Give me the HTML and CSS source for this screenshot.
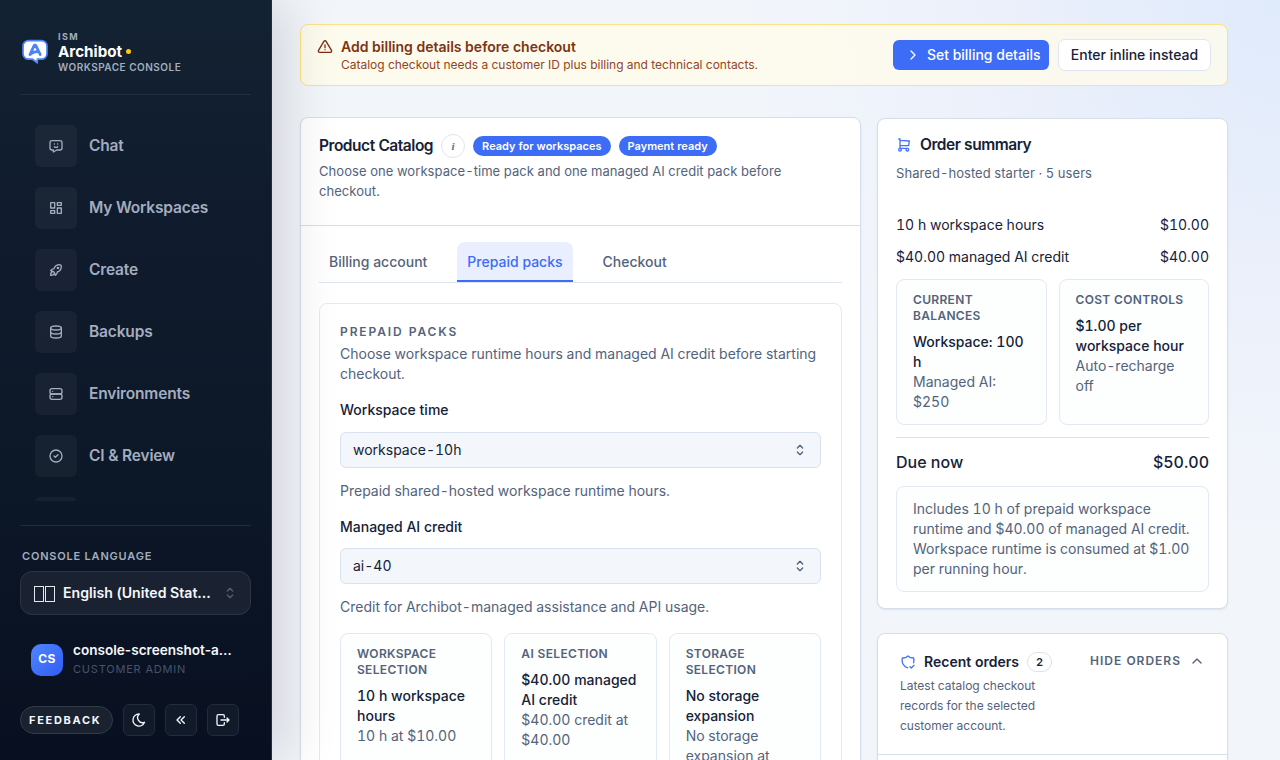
FILE: index.html
```html
<!DOCTYPE html>
<html lang="en">
<head>
<meta charset="utf-8">
<title>Archibot – Product Catalog</title>
<link rel="stylesheet" href="styles.css">
</head>
<body>
<div class="app">
  <aside class="sidebar">
    <div class="brand">
      <svg class="brand-logo" viewBox="0 0 28 28"><path d="M7.500 2.600h13a5.500 5.500 0 0 1 5.500 5.500v7.600a5.500 5.500 0 0 1-5.500 5.500h-4.200v3.600l-4.800-3.600h-4A5.500 5.500 0 0 1 2 15.700V8.100a5.500 5.500 0 0 1 5.500-5.500z" fill="#fff" stroke="#4b83fb" stroke-width="1.700" stroke-linejoin="round"/><path d="M9 16.500 13 7.800q1-1.700 2 0l4.200 8.700M9 16.500q4-3.600 8.300-2.700" fill="none" stroke="#4b83fb" stroke-width="2.800" stroke-linecap="round" stroke-linejoin="round"/></svg>
      <div class="brand-text">
        <span class="brand-over">ISM</span>
        <span class="brand-name">Archibot<i class="brand-dot"></i></span>
        <span class="brand-sub">WORKSPACE CONSOLE</span>
      </div>
    </div>
    <nav class="nav">
      <a class="nav-item"><span class="nav-icon"><svg class="icon" viewBox="0 0 24 24"><path d="M18 4a3 3 0 0 1 3 3v8a3 3 0 0 1-3 3h-5l-5 3v-3H6a3 3 0 0 1-3-3V7a3 3 0 0 1 3-3h12zM9.500 9h.01M14.500 9h.01M9.500 13a3.500 3.500 0 0 0 5 0"/></svg></span><span class="nav-label">Chat</span></a>
      <a class="nav-item"><span class="nav-icon"><svg class="icon" viewBox="0 0 24 24"><path d="M4 4h6v8H4zM4 16h6v4H4zM14 12h6v8h-6zM14 4h6v4h-6z"/></svg></span><span class="nav-label">My Workspaces</span></a>
      <a class="nav-item"><span class="nav-icon"><svg class="icon" viewBox="0 0 24 24"><path d="M4 13a8 8 0 0 1 7 7 6 6 0 0 0 3-5 9 9 0 0 0 6-8 3 3 0 0 0-3-3 9 9 0 0 0-8 6 6 6 0 0 0-5 3M7 14a6 6 0 0 0-3 6 6 6 0 0 0 6-3"/><circle cx="15" cy="9" r="1"/></svg></span><span class="nav-label">Create</span></a>
      <a class="nav-item"><span class="nav-icon"><svg class="icon" viewBox="0 0 24 24"><ellipse cx="12" cy="6" rx="8" ry="3"/><path d="M4 6v6a8 3 0 0 0 16 0V6M4 12v6a8 3 0 0 0 16 0v-6"/></svg></span><span class="nav-label">Backups</span></a>
      <a class="nav-item"><span class="nav-icon"><svg class="icon" viewBox="0 0 24 24"><rect x="3" y="4" width="18" height="8" rx="3"/><rect x="3" y="12" width="18" height="8" rx="3"/><path d="M7 8v.01M7 16v.01"/></svg></span><span class="nav-label">Environments</span></a>
      <a class="nav-item"><span class="nav-icon"><svg class="icon" viewBox="0 0 24 24"><circle cx="12" cy="12" r="9"/><path d="m9 12 2 2 4-4"/></svg></span><span class="nav-label">CI &amp; Review</span></a>
      <a class="nav-item"><span class="nav-icon"></span></a>
    </nav>
    <div class="side-foot">
      <span class="lang-label">CONSOLE LANGUAGE</span>
      <div class="lang-select"><span class="flag"><i></i><i></i></span><span class="lang-name">English (United States)</span><svg class="icon chev" viewBox="0 0 24 24"><path d="m8 9 4-4 4 4M16 15l-4 4-4-4"/></svg></div>
      <div class="user">
        <span class="avatar">CS</span>
        <div class="user-text"><span class="user-name">console-screenshot-admin</span><span class="user-role">CUSTOMER ADMIN</span></div>
      </div>
      <div class="actions">
        <span class="feedback">FEEDBACK</span>
        <span class="action"><svg class="icon" viewBox="0 0 24 24"><path d="M12 3h.393a7.500 7.500 0 0 0 7.920 12.446A9 9 0 1 1 12 3z"/></svg></span>
        <span class="action"><svg class="icon" viewBox="0 0 24 24"><path d="m11 7-5 5 5 5M17 7l-5 5 5 5"/></svg></span>
        <span class="action"><svg class="icon" viewBox="0 0 24 24"><path d="M14 8V6a2 2 0 0 0-2-2H5a2 2 0 0 0-2 2v12a2 2 0 0 0 2 2h7a2 2 0 0 0 2-2v-2M9 12h12l-3-3M18 15l3-3"/></svg></span>
      </div>
    </div>
  </aside>

  <main class="main">
    <section class="alert">
      <svg class="icon alert-icon" viewBox="0 0 24 24"><path d="M12 9v4M12 16v.01M10.363 3.591 2.257 17.125a1.914 1.914 0 0 0 1.636 2.871h16.214a1.914 1.914 0 0 0 1.636-2.870L13.637 3.591a1.914 1.914 0 0 0-3.274 0z"/></svg>
      <div class="alert-text">
        <span class="alert-title">Add billing details before checkout</span>
        <span class="alert-sub">Catalog checkout needs a customer ID plus billing and technical contacts.</span>
      </div>
      <a class="btn primary"><svg class="icon" viewBox="0 0 24 24"><path d="m9 6 6 6-6 6"/></svg>Set billing details</a>
      <a class="btn plain">Enter inline instead</a>
    </section>

    <div class="columns">
      <section class="card catalog">
        <header class="catalog-head">
          <div class="title-row"><h2 class="card-title">Product Catalog</h2><span class="info">i</span><span class="pill">Ready for workspaces</span><span class="pill">Payment ready</span></div>
          <p class="card-desc">Choose one workspace-time pack and one managed AI credit pack before checkout.</p>
        </header>
        <div class="tabs"><span class="tab">Billing account</span><span class="tab active">Prepaid packs</span><span class="tab">Checkout</span></div>
        <div class="panel">
          <span class="eyebrow">PREPAID PACKS</span>
          <p class="muted">Choose workspace runtime hours and managed AI credit before starting checkout.</p>
          <label class="field-label">Workspace time</label>
          <div class="select">workspace-10h<svg class="icon" viewBox="0 0 24 24"><path d="m8 9 4-4 4 4M16 15l-4 4-4-4"/></svg></div>
          <p class="muted hint">Prepaid shared-hosted workspace runtime hours.</p>
          <label class="field-label second">Managed AI credit</label>
          <div class="select">ai-40<svg class="icon" viewBox="0 0 24 24"><path d="m8 9 4-4 4 4M16 15l-4 4-4-4"/></svg></div>
          <p class="muted hint">Credit for Archibot-managed assistance and API usage.</p>
          <div class="tiles three">
            <div class="tile"><span class="tile-label">WORKSPACE SELECTION</span><strong>10 h workspace hours</strong><span>10 h at $10.00</span></div>
            <div class="tile"><span class="tile-label">AI SELECTION</span><strong>$40.00 managed AI credit</strong><span>$40.00 credit at $40.00</span></div>
            <div class="tile"><span class="tile-label">STORAGE SELECTION</span><strong>No storage expansion</strong><span>No storage expansion at $0.00</span></div>
          </div>
        </div>
      </section>

      <div class="side">
        <section class="card summary">
          <div class="summary-title"><svg class="icon blue" viewBox="0 0 24 24"><circle cx="6" cy="19" r="2"/><circle cx="17" cy="19" r="2"/><path d="M17 17H6V3H4M6 5l14 1-1 7H6"/></svg><h2 class="card-title">Order summary</h2></div>
          <p class="card-desc">Shared-hosted starter · 5 users</p>
          <div class="line first"><span>10 h workspace hours</span><span>$10.00</span></div>
          <div class="line"><span>$40.00 managed AI credit</span><span>$40.00</span></div>
          <div class="tiles two">
            <div class="tile"><span class="tile-label">CURRENT BALANCES</span><strong>Workspace: 100 h</strong><span>Managed AI: $250</span></div>
            <div class="tile"><span class="tile-label">COST CONTROLS</span><strong>$1.00 per workspace hour</strong><span>Auto-recharge off</span></div>
          </div>
          <div class="due"><span>Due now</span><span>$50.00</span></div>
          <p class="note">Includes 10 h of prepaid workspace runtime and $40.00 of managed AI credit. Workspace runtime is consumed at $1.00 per running hour.</p>
        </section>
        <section class="card recent">
          <header class="recent-head">
            <div class="recent-text">
              <div class="recent-title"><svg class="icon blue" viewBox="0 0 24 24"><path d="M11.460 20.846A12 12 0 0 1 3.500 6 12 12 0 0 0 12 3a12 12 0 0 0 8.500 3 12 12 0 0 1-.090 7.060M15 19l2 2 4-4"/></svg><h3>Recent orders</h3><span class="count">2</span></div>
              <p>Latest catalog checkout records for the selected customer account.</p>
            </div>
            <span class="hide">HIDE ORDERS<svg class="icon" viewBox="0 0 24 24"><path d="m6 15 6-6 6 6"/></svg></span>
          </header>
        </section>
      </div>
    </div>
  </main>
</div>
</body>
</html>
```
FILE: styles.css
```css
* { box-sizing: border-box; }
body { margin: 0; font-family: Inter, "Liberation Sans", sans-serif; color: #152238; font-size: 14px; line-height: 20px; }
h2, h3, p { margin: 0; }
.icon { width: 16px; height: 16px; flex: none; fill: none; stroke: currentColor; stroke-width: 2; stroke-linecap: round; stroke-linejoin: round; }
.app { display: flex; width: 1280px; height: 760px; overflow: hidden; background: radial-gradient(circle at 100% 0, #dfeafb 0, rgba(232,238,251,.85) 230px, rgba(241,244,250,0) 530px), #f2f5fa; }

.sidebar { position: relative; z-index: 1; flex: none; width: 272px; height: 760px; padding: 28px 20px 24px; display: flex; flex-direction: column; background: linear-gradient(180deg, #132232 0, #0f1a2c 35%, #0c1727 65%, #080f20 100%); border-right: 1px solid #1c2d50; box-shadow: 18px 0 48px rgba(10,12,16,.12); color: #a3adbf; }
.brand { display: flex; align-items: center; gap: 9px; padding: 0 0 19px 1px; height: 67px; border-bottom: 1px solid #222f3f; }
.brand-logo { width: 28px; height: 28px; margin-top: 1px; }
.brand-text { display: flex; flex-direction: column; }
.brand-over { font-size: 9px; line-height: 15px; font-weight: 700; letter-spacing: 1.4px; }
.brand-name { display: flex; align-items: center; gap: 4px; font-size: 15.2px; line-height: 16px; font-weight: 700; color: #fff; }
.brand-dot { width: 5px; height: 5px; border-radius: 50%; background: #facc15; }
.brand-sub { font-size: 10px; line-height: 15px; font-weight: 600; letter-spacing: .5px; }
.nav { flex: none; height: 406px; overflow: hidden; padding: 30px 15px 0; display: flex; flex-direction: column; gap: 20px; }
.nav-item { flex: none; display: flex; align-items: center; gap: 12px; font-size: 15.52px; font-weight: 600; letter-spacing: -.17px; }
.nav-label { padding-bottom: 1px; }
.nav-icon { width: 42px; height: 42px; border-radius: 6px; background: rgba(255,255,255,.045); display: flex; align-items: center; justify-content: center; }
.side-foot { margin-top: 24px; padding-top: 22px; border-top: 1px solid #202b3a; }
.lang-label { display: block; padding-left: 2px; font-size: 11px; line-height: 16px; font-weight: 600; letter-spacing: .8px; }
.lang-select { margin-top: 7px; height: 44px; padding: 0 12px; border: 1px solid #2c3543; border-radius: 12px; background: #1a2231; display: flex; align-items: center; color: #f5f7fb; font-weight: 600; }
.flag { flex: none; width: 30px; padding: 2px 0 0 1px; display: flex; gap: 1px; }
.flag i { width: 10px; height: 16px; border: 1px solid #e4e7ec; }
.lang-name { width: 150px; font-size: 14.08px; letter-spacing: .03px; overflow: hidden; text-overflow: ellipsis; white-space: nowrap; }
.chev { margin-left: 9px; color: #526078; }
.user { margin-top: 25px; padding-left: 11px; display: flex; gap: 10px; align-items: center; }
.avatar { width: 32px; height: 32px; margin-top: 2px; border-radius: 10px; background: linear-gradient(135deg, #4f86ff, #315cf4); color: #fff; font-size: 12px; font-weight: 700; line-height: 30px; text-align: center; letter-spacing: .3px; }
.user-text { display: flex; flex-direction: column; }
.user-name { width: 163px; font-size: 13.6px; overflow: hidden; text-overflow: ellipsis; white-space: nowrap; font-weight: 600; color: #f5f7fb; }
.user-role { font-size: 11px; line-height: 18px; letter-spacing: .8px; color: #46546b; }
.actions { margin-top: 26px; display: flex; align-items: center; gap: 10px; color: #f5f7fb; }
.feedback { width: 93px; height: 28px; border: 1px solid #323b48; border-radius: 14px; background: #1a2230; font-size: 11px; font-weight: 700; letter-spacing: 1.7px; line-height: 26px; padding-left: 8px; }
.action { width: 32px; height: 32px; border: 1px solid #242c3b; border-radius: 6px; background: #111a29; display: flex; align-items: center; justify-content: center; }

.main { flex: 1; min-width: 0; padding: 24px 52px 0 28px; font-variant-numeric: tabular-nums; }
.alert { height: 62px; padding: 12px 16px; border: 1px solid #fde184; border-radius: 8px; background: rgba(255,251,235,.82); display: flex; align-items: center; }
.alert-icon { margin: -16px 8px 0 0; color: #7c2d12; }
.alert-text { display: flex; flex-direction: column; margin-right: auto; color: #7c3412; font-variant-numeric: normal; }
.alert-title { font-size: 14.04px; font-weight: 600; line-height: 20px; }
.alert-sub { font-size: 12px; line-height: 16px; letter-spacing: -.02px; color: #92451f; }
.btn { display: flex; align-items: center; font-weight: 500; white-space: nowrap; font-variant-numeric: normal; }
.primary { height: 30px; width: 156px; padding: 0 8.5px 0 12px; justify-content: space-between; border-radius: 6px; background: #3d6cf6; color: #fff; }
.plain { margin-left: 9px; height: 32px; width: 153px; justify-content: center; border: 1px solid #dfe6f1; border-radius: 7px; background: #fff; }

.columns { margin-top: 31px; display: grid; grid-template-columns: 561px 351px; gap: 16px; align-items: start; }
.card { background: #fff; border: 1px solid #d5deeb; border-radius: 8px; box-shadow: 0 1px 2px rgba(30,50,90,.08); }
.catalog { height: 720px; overflow: hidden; }
.catalog-head { height: 108px; padding: 16px 18px; border-bottom: 1px solid #d5deeb; }
.title-row { display: flex; align-items: center; gap: 8px; height: 24px; }
.card-title { font-size: 15.52px; line-height: 23px; padding-bottom: 1px; font-weight: 600; letter-spacing: -.47px; }
.info { width: 24px; height: 24px; border: 1px solid #dfe6f1; border-radius: 50%; text-align: center; font: italic 700 11px/22px "Liberation Serif", serif; color: #5b6b84; }
.pill { height: 20px; padding: 0 9px; border-radius: 10px; background: #3d6cf6; color: #fff; font-size: 11px; line-height: 20px; font-weight: 600; letter-spacing: .01px; }
.card-desc { margin-top: 3px; font-size: 13px; line-height: 20px; letter-spacing: .06px; color: #53637c; }
.tabs { margin: 16px 18px 0; height: 41px; border-bottom: 1px solid #dde5f0; display: flex; gap: 20px; }
.tab { height: 40px; padding: 0 10px; line-height: 40px; font-weight: 500; color: #53637c; }
.active { background: #e9effe; border-bottom: 2px solid #3d6cf6; border-radius: 8px 8px 0 0; color: #3d6cf6; }
.panel { margin: 20px 18px 0; height: 560px; padding: 20px; border: 1px solid #e4eaf4; border-radius: 8px; }
.eyebrow { display: block; font-size: 12px; line-height: 16px; font-weight: 600; letter-spacing: 1.9px; color: #53637c; }
.muted { color: #53637c; }
.eyebrow + .muted { margin-top: 4px; }
.field-label { display: block; margin-top: 16px; font-weight: 500; }
.select { margin-top: 12px; height: 36px; padding: 0 12px; border: 1px solid #d9e2ee; border-radius: 6px; background: #f3f6fa; display: flex; align-items: center; justify-content: space-between; }
.select .icon { color: #53637c; }
.hint { margin-top: 13px; }
.second { margin-top: 16px; }
.second + .select { margin-top: 11px; }
.tiles { display: grid; gap: 12px; }
.three { margin-top: 16px; grid-template-columns: repeat(3, 1fr); }
.two { margin-top: 12px; grid-template-columns: repeat(2, 1fr); }
.tile { padding: 12px 16px; border: 1px solid #e3e9f3; border-radius: 8px; background: #fdfefe; display: flex; flex-direction: column; color: #53637c; }
.tile-label { margin-bottom: 8px; font-size: 12px; line-height: 16px; font-weight: 600; letter-spacing: .32px; }
.tile strong { font-weight: 500; color: #152238; }

.side { display: flex; flex-direction: column; gap: 24px; padding-top: 1px; }
.summary { height: 491px; padding: 14px 18px 16px; }
.summary-title { display: flex; gap: 8px; align-items: center; height: 24px; }
.blue { color: #4472f8; }
.summary .card-desc { margin-top: 6px; }
.line { display: flex; justify-content: space-between; margin-top: 12px; }
.first { margin-top: 32px; }
.due { margin-top: 12px; padding-top: 12px; border-top: 1px solid #d9e2ee; display: flex; justify-content: space-between; font-size: 16px; line-height: 24px; font-weight: 500; }
.note { margin-top: 12px; padding: 12px 14px 12px 16px; border: 1px solid #e3e9f3; border-radius: 8px; background: #fdfefe; color: #53637c; }
.recent { height: 200px; }
.recent-head { height: 121px; padding: 18px 22px; border-bottom: 1px solid #d5deeb; display: flex; justify-content: space-between; }
.recent-text { width: 160px; color: #53637c; font-size: 12px; }
.recent-text p { width: 150px; margin-top: 4px; }
.recent-title { display: flex; align-items: center; gap: 8px; height: 20px; white-space: nowrap; color: #152238; }
.recent-title h3 { font-size: 14px; font-weight: 600; }
.count { flex: none; width: 25px; height: 20px; border: 1px solid #d9e2ee; border-radius: 10px; font-size: 11px; line-height: 18px; font-weight: 600; text-align: center; }
.hide { display: flex; height: 18px; align-items: center; gap: 8px; font-size: 12px; font-weight: 600; letter-spacing: 1px; color: #53637c; }
```
